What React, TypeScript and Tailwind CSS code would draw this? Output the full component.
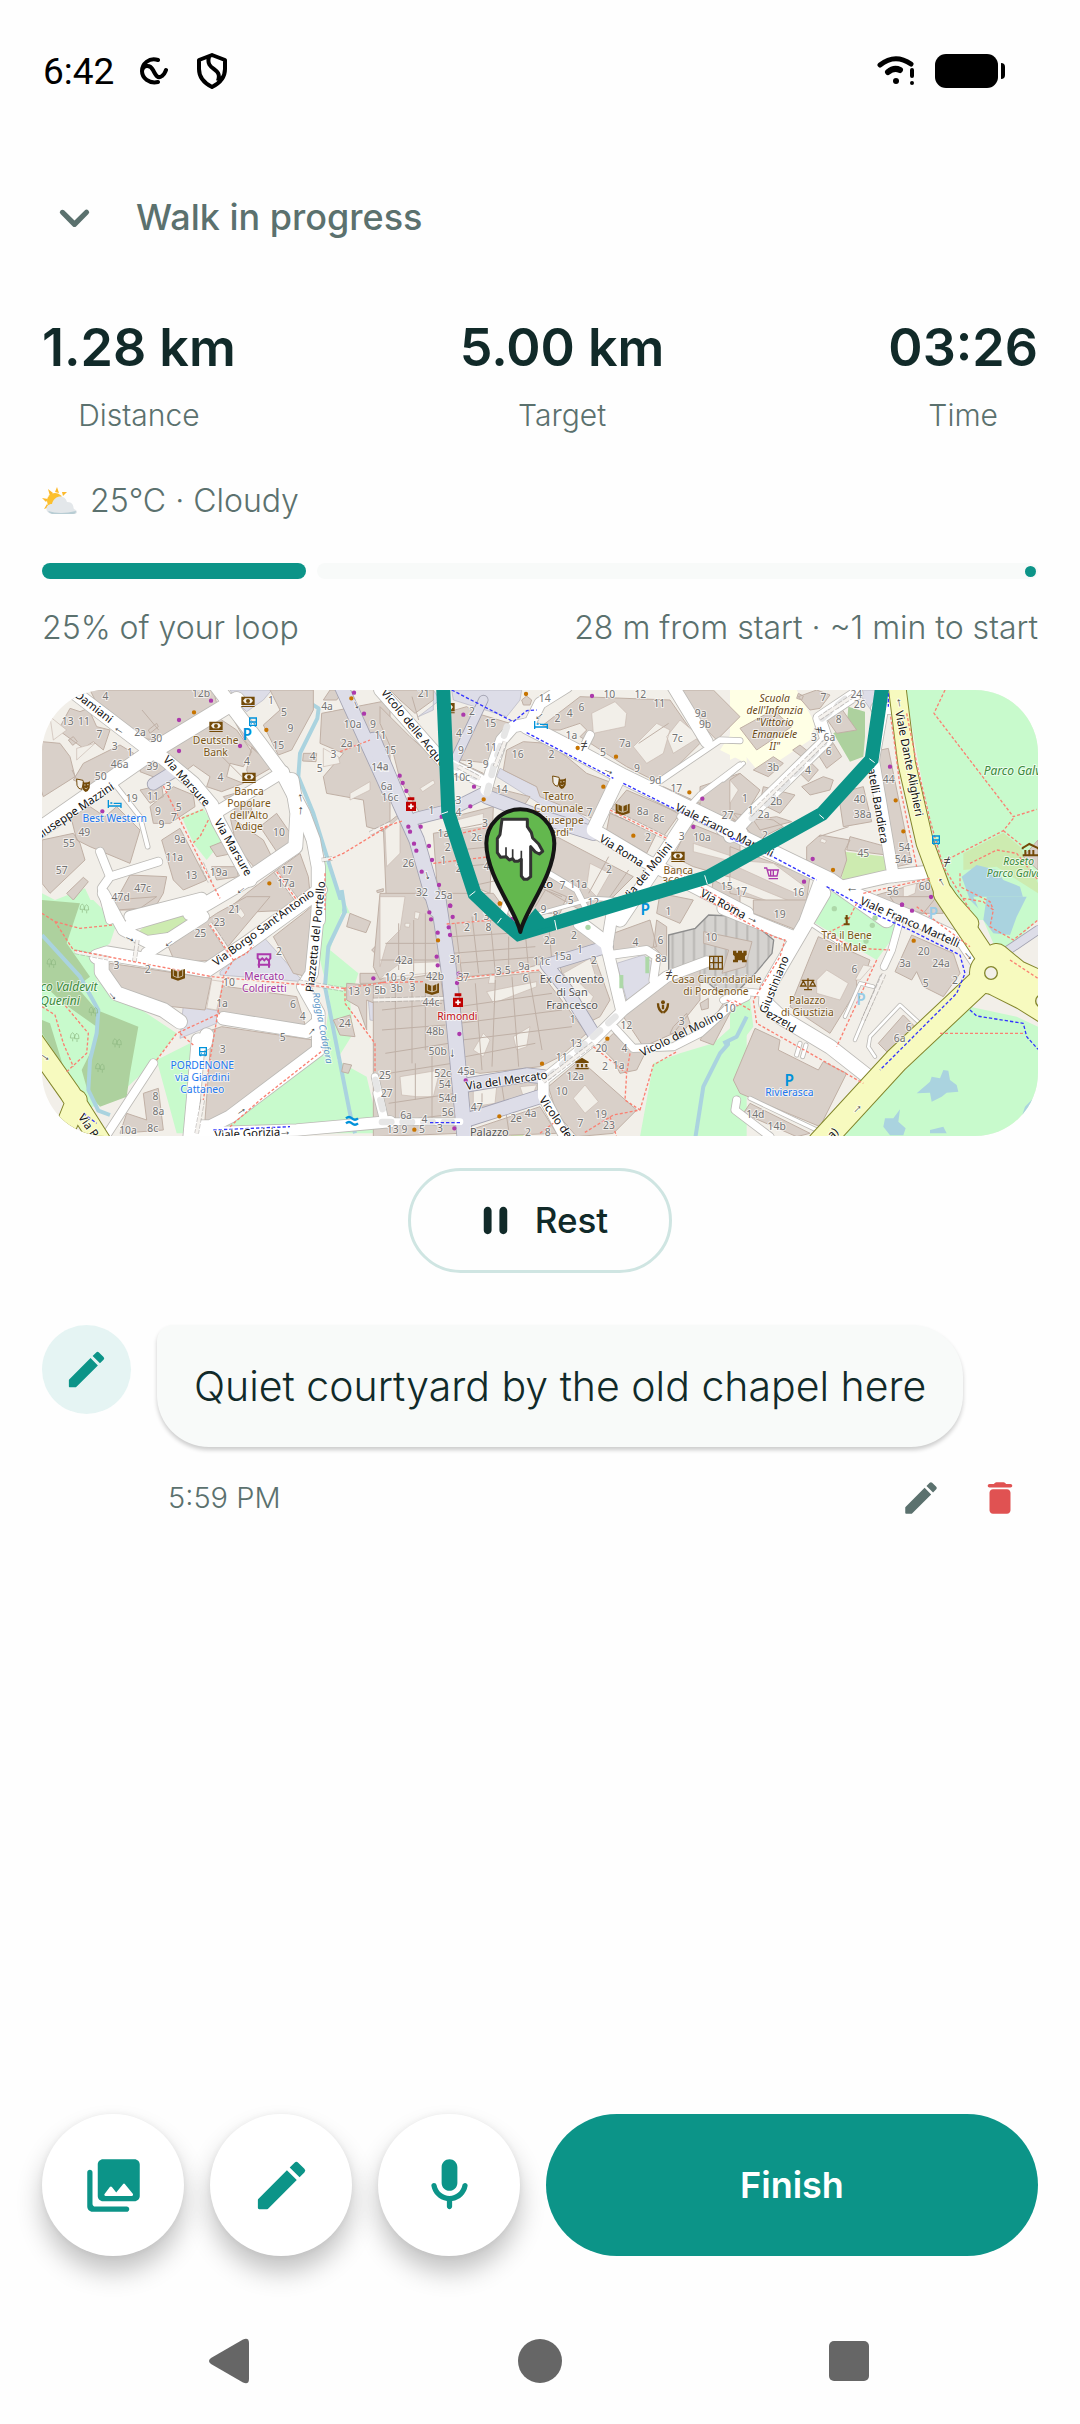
import type { ReactNode } from 'react';

type Label = [x: number, y: number, text: string, angle?: number];

interface Tile {
  x: number;
  y: number;
  park?: string;
  grass?: string;
  forest?: string;
  lake?: string;
  stream?: string;
  school?: string;
  buildings?: string;
  yards?: string;
  plazas?: string;
  alleys?: [number, string][];
  roads?: [number, string][];
  main?: [number, string][];
  lanes?: string;
  paths?: string;
  cycle?: string;
  shops?: string;
  food?: string;
  arrows?: Label[];
  numbers?: Label[];
  streets?: Label[];
  places?: Label[];
  water?: Label[];
  parks?: Label[];
  schools?: Label[];
  stops?: Label[];
  markets?: Label[];
  health?: Label[];
  areas?: Label[];
}

const TILES: Tile[] = [
  {
    x: -36,
    y: -30,
    park: 'M36 640L75 660L165 625L200 700L36 700ZM455 410L520 385L578 480L530 540L490 490ZM885 540L960 700L885 700Z',
    forest: 'M36 668L110 672L180 690L180 700L36 700Z',
    grass: 'M480 690L530 668L545 690Z',
    stream: 'M842 70L866 85L862 115L810 220L805 290L850 400L900 560L945 700',
    buildings:
      'M36 185L90 190L120 230L135 290L40 350L30 320ZM85 150L120 85L150 95L175 85L200 140L240 150L220 210L190 185L160 205ZM115 180L130 170L142 185L128 196ZM160 250L270 195L335 235L180 320L130 300ZM180 30L550 30L560 70L380 180L330 175L210 90ZM355 150L380 130L385 140L360 160ZM340 250L375 225L440 270L395 300L330 275ZM410 215L560 110L620 150L665 215L640 260L600 250L590 290L640 310L575 335L530 320L540 290L490 255L470 270ZM595 90L700 180L690 225L650 190ZM700 135L750 90L720 30L850 30L850 90L785 210L745 225ZM665 200L730 260L660 300L650 270ZM580 350L650 330L665 390L640 420ZM120 400L180 380L225 410L260 380L330 450L300 550L180 500L140 480ZM36 480L130 460L150 490L165 540L60 640L36 610ZM110 640L160 592L175 605L130 660ZM270 640L300 585L410 590L400 640L370 690L250 690ZM360 380L430 320L490 345L495 380L420 430L370 430ZM330 330L395 315L400 350L360 370ZM395 480L450 445L530 600L460 630L430 600ZM540 500L590 480L625 550L610 520L560 530ZM600 410L700 480L740 560L680 570L620 500ZM690 440L740 400L795 480L740 515ZM545 560L620 560L625 590L560 600ZM650 640L740 570L810 520L835 590L840 640L790 690L580 700ZM875 100L1080 60L1080 460L1010 440L1000 360L890 340L880 290L940 220L870 190ZM900 30L940 30L920 60L880 60ZM820 220L860 220L858 245L818 243ZM1040 632L1060 626L1060 634L1042 638Z',
    yards: 'M60 110L110 150L70 180ZM140 205L195 190L140 240ZM880 205L925 230L930 250L880 260ZM960 340L1020 305L1020 330L960 360Z',
    plazas: 'M600 30L725 30L700 60L650 95L625 70Z',
    alleys: [
      [34, 'M435 272L370 312'],
      [40, 'M925 0L1080 340'],
    ],
    roads: [
      [48, 'M0 470L365 215L620 60'],
      [40, 'M110 20L365 215L400 235L490 310L545 375L565 425L660 600'],
      [40, 'M560 20L690 190L760 285L820 400L850 480L865 560L865 720'],
      [34, 'M760 275L555 400'],
      [42, 'M785 300L802 400L796 500L650 600L480 700'],
      [24, 'M210 515L240 590L385 545M240 590L215 625L240 720'],
      [12, 'M260 320L330 410L353 500'],
      [34, 'M515 655L300 710'],
    ],
    paths: 'M400 318L455 430L520 560L570 655M455 415L520 388M535 420L510 470L490 488M740 575L800 660M885 580L885 690M895 540L940 520L1080 435M930 215L1020 180',
    lanes: 'M515 550L540 605M738 575L800 660M875 540L910 535M1020 460L1080 430',
    shops: 'M543 62h.1M447 120h.1M447 213h.1M630 198h.1M217 394h.1M972 38h.1M1002 101h.1',
    food: 'M492 97h.1M709 150h.1M718 610h.1M964 55h.1',
    arrows: [[270, 145, '←', 32], [804, 355, '→', -100], [804, 392, '→', -86], [628, 625, '←', -38], [985, 72, '→', 68]],
    numbers: [
      [226, 50, '4'], [513, 40, '12b'], [113, 123, '13'], [162, 125, '11'], [208, 162, '7'], [254, 198, '3'], [300, 216, '1'], [330, 158, '2a'],
      [379, 176, '30'], [269, 252, '46a'], [367, 259, '39'], [212, 290, '50'], [305, 355, '19'], [369, 350, '11'], [415, 319, '3'], [384, 395, '9'],
      [446, 383, '5'], [432, 412, '7'], [394, 433, '9'], [163, 458, '49'], [117, 491, '55'], [95, 570, '57'], [338, 625, '47c'], [272, 652, '47d'],
      [450, 478, '9a'], [433, 533, '11a'], [484, 586, '13'], [566, 577, '19a'], [571, 292, '4'], [651, 243, '4'], [723, 62, '1'], [762, 97, '5'],
      [781, 146, '9'], [745, 196, '15'], [747, 457, '10'], [771, 570, '17'], [768, 610, '17a'], [891, 79, '4a'], [848, 230, '4'],
      [869, 266, '5'], [910, 224, '3'], [950, 190, '2a'], [986, 206, '1'], [968, 133, '10a'], [1029, 134, '9'], [1051, 166, '11'], [1050, 261, '14a'],
    ],
    streets: [
      [192, 80, 'Damiani', 38], [132, 394, 'Giuseppe Mazzini', -34], [470, 303, 'Via Marsure', 48], [610, 502, 'Via Marsure', 60],
    ],
    places: [[557, 180, 'Deutsche'], [557, 216, 'Bank'], [657, 333, 'Banca'], [657, 369, 'Popolare'], [657, 405, "dell'Alto"], [657, 440, 'Adige']],
    stops: [[254, 415, 'Best Western']],
  },
  {
    x: 1014,
    y: -30,
    buildings:
      'M30 30L160 30L160 60L105 100L60 60ZM0 80L90 170L180 250L190 390L120 400L60 300L40 220L0 130ZM190 100L260 80L290 100L240 220L215 220ZM290 100L390 130L340 200L330 250L240 240ZM380 210L430 185L500 190L560 230L620 280L700 310L650 420L600 400L480 350L470 320L370 270ZM330 320L450 350L430 380L330 370ZM225 240L310 280L300 300L225 290ZM470 150L600 50L870 60L960 190L840 310L740 260L600 170L620 150L600 130L540 150ZM425 60L440 48L455 60L450 75L430 75ZM900 30L1000 30L1080 110L1010 180L950 120ZM740 330L900 400L850 470L690 390ZM690 400L830 460L800 520L680 450ZM850 320L960 370L930 420L800 350ZM960 320L1080 280L1080 430L960 380ZM930 430L1080 490L1080 600L940 560L880 530ZM530 470L760 590L700 650L600 690L480 620L510 560ZM220 410L340 380L330 640L280 620ZM10 440L60 400L120 470L140 690L20 690ZM160 460L220 450L280 640L370 690L200 690L170 600ZM1000 600L1080 640L1080 690L990 660ZM460 650L490 620L560 650L540 700L450 700Z',
    yards: 'M635 100L705 65L740 100L735 140L640 160ZM760 200L830 130L870 150L850 220L800 250ZM860 170L900 120L960 170L880 220ZM15 450L60 410L60 520L20 560ZM120 325L160 300L165 310L128 335ZM230 420L310 400L310 440L240 450ZM630 550L690 580L650 650L620 620ZM940 490L1060 530L1060 545L940 515Z',
    school: 'M1020 210L1100 90L1100 250Z',
    plazas: 'M215 30L425 30L420 60L380 110L220 60ZM360 265L490 330L640 430L620 460L350 290ZM160 30L180 60L115 110L160 90Z',
    alleys: [
      [34, 'M110 415L210 390L310 340'],
      [40, 'M320 350L450 400L640 460'],
      [26, 'M310 60L225 240'],
      [44, 'M-20 180L60 370L110 480L170 690'],
    ],
    roads: [
      [36, 'M0 30L190 245L300 300'],
      [34, 'M318 330L340 250L365 180L400 140L450 130L480 70L560 20'],
      [46, 'M440 138L600 220L730 290L1080 460'],
      [40, 'M712 300L640 450L800 545L1100 700'],
      [40, 'M925 410L820 570L720 720'],
      [36, 'M880 20L980 185'],
      [24, 'M630 165L610 205'],
      [16, 'M800 330L1020 180L1080 182M900 410L960 345L1080 255'],
      [16, 'M490 570L590 630L620 690'],
      [22, 'M390 640L370 700'],
    ],
    paths: 'M0 445L70 422M160 550L330 530M220 465L330 440M690 390L860 475M860 560L1080 690',
    lanes: 'M690 390L860 475M235 260L300 295M375 185L345 260',
    cycle: 'M215 30L400 125L440 92L470 90M440 158L700 295M730 310L1080 485',
    shops: 'M250 104h.1M636 48h.1M59 287h.1M68 309h.1M79 333h.1M185 410h.1M85 440h.1M90 455h.1M122 440h.1M102 491h.1M109 512h.1M147 498h.1M156 540h.1M125 575h.1M177 615h.1M211 677h.1M271 379h.1M282 320h.1M940 441h.1M967 356h.1',
    food: 'M438 42h.1M593 204h.1M708 230h.1M670 320h.1M311 358h.1M760 467h.1M928 337h.1M360 671h.1',
    arrows: [[473, 103, '←', -40], [688, 268, '→', 22], [149, 585, '→', 75], [612, 196, '≠', 0]],
    numbers: [
      [131, 40, '21'], [276, 94, '2'], [494, 54, '14'], [532, 114, '2'], [569, 99, '4'], [604, 83, '6'], [688, 44, '10'], [781, 42, '12'], [838, 70, '11'],
      [962, 100, '9a'], [975, 133, '9b'], [331, 130, '15'], [270, 152, '3'], [237, 160, '4'], [243, 212, '9'], [333, 202, '11'], [413, 223, '16'], [514, 223, '2'],
      [574, 165, '1a'], [735, 191, '7a'], [892, 175, '7c'], [669, 216, '5'], [771, 265, '9'], [826, 300, '9d'], [889, 326, '17'], [317, 253, '9'], [269, 253, '3'],
      [245, 291, '10c'], [365, 328, '14'], [235, 362, '3'], [235, 396, '4'], [315, 429, '3'], [154, 392, '1'], [10, 166, '1'], [31, 212, '15'], [8, 260, '4a'],
      [20, 319, '6a'], [30, 353, '16c'], [190, 461, '1a'], [203, 502, '2'], [289, 471, '2c'], [190, 541, '1'], [85, 550, '26'], [236, 565, '2'], [319, 559, '4'],
      [126, 636, '32'], [191, 645, '25a'], [628, 396, '7'], [788, 394, '8a'], [836, 416, '8c'], [804, 472, '2'], [905, 470, '3'], [966, 472, '10a'], [1042, 406, '27'],
      [687, 567, '2'], [547, 615, '7'], [595, 614, '11a'], [572, 662, '5'], [640, 668, '12'], [1040, 619, '15'],
    ],
    streets: [
      [102, 143, 'Vicolo delle Acque', 51], [1034, 450, 'Viale Franco Martelli', 26], [725, 512, 'Via Roma', 32], [802, 575, 'Via dei Molini', -51], [1030, 672, 'Via Roma', 28], [495, 612, 'sto', 0],
    ],
    places: [[536, 348, 'Teatro'], [536, 384, 'Comunale'], [536, 420, '"Giuseppe'], [536, 456, 'Verdi"'], [895, 570, 'Banca'], [873, 604, '360']],
  },
  {
    x: 2064,
    y: -30,
    park: 'M525 20L930 20L930 720L720 720L650 600L600 430L560 220ZM290 630L380 670L360 700L260 700Z',
    grass: 'M345 515L470 530L475 580L335 600ZM700 520L820 458L870 500L924 610L924 640L800 560L700 570Z',
    lake: 'M695 590L740 555L800 570L820 600L870 620L890 690L850 720L760 700L720 660Z',
    school: 'M0 30L200 30L255 130L240 180L90 280L40 220L0 240Z',
    buildings:
      'M30 145L130 90L185 140L80 210ZM205 50L260 30L300 45L270 85L240 90ZM205 40L220 48L215 60L200 55ZM285 110L330 80L380 150L320 160ZM188 210L210 195L235 215L215 230ZM70 270L130 230L160 250L115 290ZM210 280L240 245L265 270L235 305ZM265 225L310 190L335 230L290 265ZM215 320L280 290L310 300L300 330L240 345ZM100 320L195 345L150 400L90 370ZM30 280L90 330L30 430L0 410L0 300ZM10 400L130 420L160 440L80 480ZM325 340L400 320L425 425L340 440ZM430 215L475 205L545 550L500 560ZM230 500L270 465L360 480L345 510L350 540L330 600L230 540ZM360 470L470 500L470 525L350 510ZM0 500L240 590L225 690L0 640ZM70 420L140 410L185 425L90 450ZM440 645L600 600L620 640L640 700L420 700ZM880 530L924 480L924 570Z',
    forest: 'M310 160L350 140L355 80L405 95L405 170L400 230L360 245Z',
    yards: 'M10 540L130 550L225 620L220 650L130 610L20 560ZM0 590L220 680L210 700L0 620ZM520 620L560 610L555 640L520 655ZM0 300L25 330L0 370ZM275 475L290 482L285 490L270 485Z',
    plazas: 'M380 30L435 30L430 100Z',
    roads: [
      [36, 'M0 470L60 405L290 180L268 115L380 40'],
      [44, 'M-20 445L300 600L470 720'],
      [38, 'M330 622L470 590L600 575'],
      [34, 'M455 100L430 240L490 590'],
      [40, 'M270 610L230 720'],
      [10, 'M40 250L-20 300'],
      [34, 'M440 85L480 85'],
    ],
    main: [[50, 'M500 10L530 250L585 490L640 640L720 730']],
    paths: 'M645 30L612 100L850 410L920 388M850 415L820 452L640 545M820 452L880 500M482 110L495 200L510 320L560 560M530 100L560 250L600 420L640 560L720 690M400 640L600 595M720 550L800 510L860 520L924 600M690 580L690 620L780 665L790 690',
    lanes: 'M60 405L290 180M268 115L380 40',
    cycle: 'M0 475L100 515L260 600M290 620L400 680M475 40L475 80',
    shops: 'M480 260h.1M222 605h.1M248 537h.1M516 674h.1M603 651h.1',
    food: 'M497 361h.1M520 454h.1M309 570h.1',
    arrows: [[500, 70, '→', -100], [366, 623, '←', 0], [628, 610, '→', -120], [651, 544, '≠', 0], [270, 150, '≠', 80]],
    numbers: [
      [280, 51, '7'], [379, 44, '24'], [389, 74, '26'], [326, 117, '8'], [252, 173, '3'], [298, 171, '6a'], [296, 215, '6'], [234, 270, '4'], [129, 263, '3b'],
      [139, 363, '2b'], [101, 402, '2a'], [45, 356, '1'], [62, 391, '1'], [2, 405, '7'], [105, 466, '2'], [476, 298, '44'], [389, 358, '40'], [398, 403, '38a'],
      [400, 520, '45'], [523, 503, '54'], [521, 539, '54a'], [488, 635, '56'], [584, 618, '60'], [34, 635, '17'], [205, 638, '16'],
    ],
    streets: [[442, 362, 'Fratelli Bandiera', 80], [538, 250, 'Viale Dante Alighieri', 79]],
    schools: [[134, 56, 'Scuola'], [134, 92, "dell'Infanzia"], [134, 128, '"Vittorio'], [134, 164, 'Emanuele'], [134, 199, 'II"']],
    parks: [[872, 272, 'Parco Galvani', 0]],
  },
  {
    x: -36,
    y: 630,
    park: 'M36 0L190 0L260 70L240 130L200 160L200 240L440 400L380 480L250 600L130 640L36 420ZM380 480L480 430L490 700L440 700ZM870 0L945 0L900 150L985 220L960 300L970 400L920 480L1010 530L1050 700L500 700L620 650L880 440L900 300L870 180Z',
    forest: 'M36 0L150 10L110 130L180 230L140 260L200 330L325 380L300 520L290 590L210 620L175 580L155 510L195 430L200 380L100 310L36 250ZM36 360L60 370L100 500L36 400Z',
    grass: 'M310 105L400 40L540 10L410 108Z',
    stream: 'M36 105L150 230L205 330L200 400L180 480L175 570L205 632L240 645M935 -30L945 35L895 140L885 260L960 640L975 700',
    buildings:
      'M230 205L240 190L545 235L525 330L330 310L235 260ZM560 255L800 290L830 390L565 340ZM545 390L575 380L850 420L850 450L570 665L525 660ZM415 140L560 40L650 -10L720 -10L560 180L480 185L430 175ZM730 110L820 40L855 10L830 230L790 220ZM340 580L385 565L400 690L270 700L290 640L350 660ZM250 0L380 -10L330 25L260 30ZM960 40L1022 65L1008 98L950 80ZM1025 150L1040 135L1052 150L1040 165ZM1060 130L1080 125L1080 200L1045 195ZM990 220L1080 220L1080 250L990 250ZM950 250L1080 260L1080 330L1010 300L1010 390L985 320L950 300ZM910 360L960 345L975 410L930 405ZM940 490L965 495L955 520L935 515ZM1030 430L1080 400L1080 520L1040 520Z',
    yards: 'M620 40L632 25L645 45L635 55ZM545 240L580 245L560 330L530 325Z',
    plazas: 'M570 215L700 110L820 245L570 225ZM460 315L580 335L560 370L450 415ZM1015 300L1080 310L1080 370L1020 360Z',
    roads: [
      [42, 'M200 170L230 160L530 210L650 130L870 -30'],
      [42, 'M215 170L215 215L260 280L400 330L450 365'],
      [34, 'M350 160L420 115L520 50'],
      [34, 'M220 -20L280 90L350 125L420 115M300 75L540 5'],
      [38, 'M868 -10L845 220L820 260L865 340L865 450L600 650L540 680L490 680'],
      [38, 'M580 355L830 395L860 370'],
      [40, 'M505 420L490 600L480 710M530 405L525 430'],
      [24, 'M370 490L220 720'],
      [34, 'M480 700L800 690L1080 665'],
      [20, 'M1035 530L1065 660'],
    ],
    main: [[60, 'M0 410L120 580L215 730M140 600L100 700']],
    paths: 'M36 40L75 65L130 150L545 230L940 265M75 65L150 85L250 75M36 320L75 345L100 430L130 500M110 515L170 460L175 400L100 310M380 480L440 400L570 340M450 400L490 435M540 75L610 180L580 230M610 180L650 160L670 135M580 240L520 600M945 265L945 310L1035 430L1035 520M600 680L690 600L880 450M940 265L1080 245',
    lanes: 'M135 155L235 175M322 120L313 185M540 70L600 160M805 245L940 268M518 600L500 700',
    cycle: 'M160 640L200 670M550 690L780 680',
    shops: 'M1030 235h.1',
    arrows: [[302, 110, '→', 25], [412, 124, '←', -38], [253, 284, '→', 50], [839, 390, '→', -50], [630, 628, '→', -35], [765, 692, '→', -5], [50, 466, '→', 35]],
    numbers: [
      [613, 29, '21'], [568, 68, '23'], [511, 100, '25'], [259, 195, '3'], [353, 208, '2'], [747, 154, '2'], [597, 247, '10'], [576, 309, '1a'], [789, 314, '6'],
      [818, 349, '4'], [758, 413, '5'], [578, 448, '3'], [972, 273, '13'], [1012, 273, '9'], [1051, 271, '5b'], [944, 369, '24'], [1064, 526, '25'], [1070, 580, '27'],
      [376, 588, '8'], [385, 634, '8a'], [368, 685, '8c'], [294, 692, '10a'], [1072, 234, '1'],
    ],
    streets: [[700, 82, "Via Borgo Sant'Antonio", -36], [856, 110, 'Piazzetta del Portello', -84], [196, 706, 'Via Roma', 55], [652, 700, 'Viale Gorizia', -3]],
    water: [[878, 384, 'Roggia Codafora', 79]],
    parks: [[90, 259, 'Parco Valdevit', 0], [90, 301, 'Querini', 0]],
    stops: [[517, 496, 'PORDENONE'], [517, 532, 'via Giardini'], [517, 568, 'Cattaneo']],
    markets: [[703, 230, 'Mercato'], [703, 266, 'Coldiretti']],
  },
  {
    x: 1014,
    y: 630,
    park: 'M820 490L900 460L1000 430L1100 340L1100 710L780 710L800 600Z',
    grass: 'M20 405L48 395L58 460L25 460ZM460 360L540 335L550 365L530 400L500 375L470 385ZM390 710L400 695L430 700L430 710Z',
    stream: 'M1090 380L1020 460L970 560L945 720',
    buildings:
      'M0 -20L160 -20L190 200L60 205L0 240L-20 200ZM195 -20L340 -20L420 90L560 60L660 120L670 150L490 190L400 215L215 235ZM215 245L480 215L620 400L540 470L480 500L300 520L250 510ZM-20 250L180 220L210 440L240 700L-20 710ZM540 200L640 160L690 300L660 350L620 370L560 270ZM700 100L810 60L830 140L700 160ZM830 60L860 80L860 180L820 140ZM730 350L860 240L960 200L960 300L880 400L790 440ZM880 380L920 340L930 370L900 405L870 400ZM960 310L985 295L985 325L965 330ZM700 400L755 450L800 450L770 510L720 520L700 480L660 440ZM505 560L600 480L770 630L700 700L590 710L530 640ZM260 570L470 530L480 580L270 650ZM270 690L480 620L530 700L270 710ZM840 -20L940 0L900 70L830 40ZM960 420L1030 310L1060 320L1000 435Z',
    yards: 'M0 -10L75 -10L60 90L20 130L0 200ZM60 190L180 185L185 215L0 235ZM550 220L630 175L650 240L600 250L640 290L620 330ZM280 570L350 560L345 610L280 620ZM580 595L615 555L655 605L615 640ZM60 530L180 510L160 590L110 590L65 585ZM75 70L90 70L88 82L75 80ZM310 400L330 420L310 470L280 450ZM400 410L450 380L440 440L410 450ZM330 225L345 225L345 250L325 250ZM320 275L470 245L470 260L340 310ZM105 35L120 38L115 58L103 55ZM420 560L470 555L460 580L430 590Z',
    plazas: 'M710 190L790 165L820 190L820 250L740 300ZM-20 290L45 300L40 350L-20 360ZM90 290L115 295L110 325L90 325ZM380 295L460 275L460 290L385 310Z',
    alleys: [
      [44, 'M150 -20L175 0L205 200L225 400L255 720'],
      [40, 'M260 555L440 525L490 530M260 660L480 590'],
      [36, 'M680 140L500 195L560 270L640 400'],
    ],
    roads: [
      [32, 'M980 185L860 230L730 330L640 420L490 540L490 590L560 720'],
      [34, 'M700 20L680 140L725 330'],
      [24, 'M690 165L800 150L830 170L820 240'],
      [22, 'M705 385L760 445L880 440L960 400L1060 310L1100 290'],
      [20, 'M-20 665L240 665M-10 580L10 660'],
      [10, 'M480 40L640 -5L720 0'],
      [40, 'M600 70L680 130'],
    ],
    paths: 'M200 72L400 55M0 248L130 245M230 235L480 210M640 440L740 520L735 600L780 630L700 645L610 700M750 460L740 520M780 630L820 495L890 455M480 700L520 670M960 -10L1080 50M690 650L710 710M1040 300L1080 320',
    lanes: 'M640 430L490 545M-20 300L190 295',
    cycle: 'M150 668L240 668',
    shops: 'M148 37h.1M153 58h.1M210 17h.1M218 51h.1M206 82h.1M173 98h.1M210 105h.1M170 170h.1M173 196h.1M236 221h.1M231 249h.1M238 402h.1M257 541h.1M223 685h.1M397 57h.1',
    food: 'M174 121h.1M359 10h.1M486 491h.1M682 416h.1M358 649h.1M103 689h.1',
    arrows: [[224, 460, '→', 90], [867, 223, '≠', 0]],
    numbers: [
      [287, 52, '1'], [319, 50, '3'], [261, 83, '2'], [325, 82, '8'], [490, 27, '9'], [526, 47, '8'], [509, 122, '2a'], [582, 107, '2'], [600, 149, '1'],
      [641, 182, '2'], [548, 170, '15a'], [485, 184, '11c'], [766, 127, '4'], [841, 121, '6'], [843, 176, '8a'], [865, 33, '1'], [994, 112, '10'], [72, 181, '42a'],
      [226, 179, '31'], [32, 233, '10'], [69, 231, '6'], [95, 229, '2'], [165, 229, '42b'], [8, 270, 'b'], [50, 266, '3b'], [97, 263, '3'], [153, 308, '44c'],
      [250, 233, '37'], [356, 215, '3'], [383, 212, '5'], [432, 199, '9a'], [436, 235, '6'], [166, 395, '48b'], [173, 455, '50b'], [188, 519, '52c'], [194, 553, '54'],
      [203, 595, '54d'], [259, 514, '45a'], [290, 622, '47'], [203, 638, '56'], [15, 526, '25'], [78, 645, '6a'], [133, 657, '4'], [38, 689, '13'],
      [73, 689, '9'], [126, 689, '5'], [180, 686, '3'], [408, 654, '2e'], [452, 641, '4a'], [545, 573, '10'], [586, 530, '12a'], [545, 472, '11'], [588, 429, '13'],
      [578, 358, '1'], [664, 446, '20'], [733, 445, '4'], [739, 377, '12'], [905, 363, '3'], [1049, 326, '10'], [675, 499, '2'], [716, 496, '1a'], [663, 643, '19'],
      [687, 677, '23'], [601, 671, '7'], [503, 698, '8'], [444, 698, '2'],
    ],
    streets: [[380, 541, 'Via del Mercato', -8], [530, 655, 'Vicolo del', 55], [905, 400, 'Vicolo del Molino', -26]],
    areas: [[576, 237, 'Ex Convento'], [576, 276, 'di San'], [576, 316, 'Francesco'], [328, 696, 'Palazzo']],
    places: [[1010, 238, 'Casa Circondariale'], [1008, 273, 'di Pordenone']],
    health: [[232, 350, 'Rimondi']],
  },
  {
    x: 2064,
    y: 630,
    park: 'M300 -10L520 70L440 180L240 60ZM720 320L860 350L924 380L924 710L320 710ZM730 -10L924 -10L924 60L830 150L790 130ZM0 290L60 300L70 380L0 470ZM0 650L20 710L0 710Z',
    stream: 'M50 350L20 410L-20 430',
    lake: 'M560 580L600 545L605 530L630 535L640 510L655 512L660 540L680 555L685 575L650 578L635 590L605 605L600 578ZM465 655L490 655L510 628L505 665L527 685L520 706L480 706L460 680ZM870 665L885 620L924 580L924 650ZM770 -10L890 -10L860 50L840 105L790 100L760 60ZM600 690L640 680L650 700L600 700Z',
    buildings:
      'M70 0L240 0L200 90L70 40ZM265 110L420 180L410 210L380 230L380 270L300 400L180 320L240 170ZM545 105L670 160L690 220L640 290L580 260L560 215L545 240L495 215ZM445 430L520 345L560 385L480 465ZM75 385L150 420L145 450L265 510L280 485L350 520L270 680L30 580L10 540ZM60 610L240 700L200 710L40 640ZM480 -10L620 -10L580 40L500 20Z',
    yards: 'M260 240L290 210L355 250L330 300L260 280ZM375 240L400 195L425 200L390 240Z',
    alleys: [[24, 'M820 160L924 90']],
    roads: [
      [42, 'M280 -20L110 270L108 310L150 350L300 440L440 550'],
      [36, 'M-20 25L200 115'],
      [40, 'M370 -20L540 50L700 125L740 185'],
      [20, 'M510 60L485 150L462 200'],
      [22, 'M20 600L15 630L120 710'],
      [10, 'M60 595L260 690M210 430L200 465M228 435L218 470M240 70L330 130'],
      [8, 'M455 230L375 420M345 350L390 250L430 260M435 470L415 440L420 410L510 315L575 375'],
      [20, 'M-20 300L40 275L100 280'],
    ],
    main: [
      [58, 'M640 -20L760 160'],
      [72, 'M745 250L500 480L270 730'],
      [76, 'M800 250L880 290L960 340M800 170L860 220L960 265'],
      [126, 'M783 218h1'],
    ],
    paths: 'M0 40L130 110L165 120L150 170L70 300L80 370L400 550M380 10L350 70L300 95L320 120L390 145L480 150M440 180L320 440M630 400L880 400M560 20L720 140M840 180L924 235M700 -5L760 5L790 30L780 80L850 120L924 60M60 330L10 300',
    lanes: 'M462 222L400 360',
    cycle: 'M385 20L540 90L690 165L705 220L680 280L450 510M720 330L740 348L880 370L890 410L924 448',
    shops: 'M516 14h.1M546 32h.1',
    food: 'M551 122h.1',
    arrows: [[70, 52, '→', 25], [720, 163, '→', 48], [377, 622, '→', -45]],
    numbers: [
      [149, 43, '19'], [373, 207, '6'], [581, 154, '20'], [525, 190, '3a'], [633, 190, '24a'], [587, 250, '5'], [675, 240, '2'], [536, 381, '6'], [509, 414, '6a'],
      [76, 642, '14d'], [140, 678, '14b'],
    ],
    streets: [[540, 66, 'Viale Franco Martelli', 24], [132, 254, 'Giustiniano', -68], [152, 366, 'Piazza', 207], [308, 700, 'a)', -45]],
    places: [[350, 107, 'Tra il Bene'], [350, 143, 'e il Male'], [232, 301, 'Palazzo'], [232, 337, 'di Giustizia']],
    stops: [[178, 578, 'Rivierasca']],
  },
];

function Layer({ children }: { children: (tile: Tile) => ReactNode }) {
  return (
    <>
      {TILES.map((tile) => (
        <g key={`${tile.x}:${tile.y}`} transform={`translate(${tile.x} ${tile.y})`}>
          {children(tile)}
        </g>
      ))}
    </>
  );
}

function Lines({ items, stroke, extra = 0 }: { items?: [number, string][]; stroke: string; extra?: number }) {
  return (
    <g fill="none" stroke={stroke} strokeLinecap="round" strokeLinejoin="round">
      {items?.map(([width, d]) => <path key={d} d={d} strokeWidth={width + extra} />)}
    </g>
  );
}

function Labels({ items, fill, size, italic }: { items?: Label[]; fill: string; size: number; italic?: boolean }) {
  return (
    <g
      fill={fill}
      fontSize={size}
      fontStyle={italic ? 'italic' : undefined}
      textAnchor="middle"
      stroke="#ffffff"
      strokeOpacity={0.65}
      strokeWidth={6}
      strokeLinejoin="round"
      paintOrder="stroke"
    >
      {items?.map(([x, y, text, angle = 0]) => (
        <text key={`${x},${y}`} transform={`translate(${x} ${y}) rotate(${angle})`} y={Math.round(size * 0.36)}>
          {text}
        </text>
      ))}
    </g>
  );
}

function Bank({ x, y }: { x: number; y: number }) {
  return (
    <g transform={`translate(${x} ${y})`}>
      <path d="M-20 -15H20V10H-20ZM-20 13H20V16H-20Z" fill="#734a08" />
      <path d="M-15 -3L-9 -10H9L15 -3L9 5H-9Z" fill="#f2efe9" />
      <circle cy={-2} r={6} fill="#734a08" />
    </g>
  );
}

function Bus({ x, y }: { x: number; y: number }) {
  return (
    <g transform={`translate(${x} ${y})`} fill="none" stroke="#0092da" strokeWidth={4}>
      <path d="M-10 -12H10V10H-10ZM-10 0H10M-7 10V14M7 10V14M-4 5H-6M4 5H6" />
    </g>
  );
}

function Book({ x, y }: { x: number; y: number }) {
  return (
    <g transform={`translate(${x} ${y})`}>
      <path d="M-21 -15L0 -8L21 -15V13L0 20L-21 13Z" fill="#734a08" />
      <path d="M-14 -14L-1 -8V11L-14 6ZM14 -14L1 -8V11L14 6Z" fill="#734a08" stroke="#f2efe9" strokeWidth={2} />
    </g>
  );
}

function Masks({ x, y }: { x: number; y: number }) {
  return (
    <g transform={`translate(${x} ${y})`}>
      <path d="M-19 -19L0 -15L2 -6L-4 12Q-14 12 -18 0Z" fill="#f2efe9" stroke="#734a08" strokeWidth={3} />
      <path d="M-1 -10Q10 -6 21 -12L20 8Q16 18 8 20Q-2 14 -2 4Z" fill="#734a08" />
      <path d="M3 -1h5M12 -2h5M5 8q5 5 9 -1M-14 -8h4M-7 -7h4" stroke="#f2efe9" strokeWidth={2} fill="none" />
    </g>
  );
}

function Pharmacy({ x, y }: { x: number; y: number }) {
  return (
    <g transform={`translate(${x} ${y})`}>
      <path d="M-10 -21H10V-12H-10ZM-15 -8H15V20H-15Z" fill="#bf0000" />
      <path d="M0 -2V14M-8 6H8" stroke="#ffffff" strokeWidth={5} />
    </g>
  );
}

function Parking({ x, y, pale }: { x: number; y: number; pale?: boolean }) {
  return (
    <text x={x} y={y} fontSize={46} fontWeight={600} textAnchor="middle" fill={pale ? '#99cbe6' : '#0092da'}>
      P
    </text>
  );
}

function Bed({ x, y }: { x: number; y: number }) {
  return <path d={`M${x - 19} ${y - 12}v24M${x - 19} ${y + 6}h38v-8h-22M${x + 19} ${y}v12M${x - 13} ${y - 3}h6`} fill="none" stroke="#0092da" strokeWidth={4} />;
}

function Tree({ x, y }: { x: number; y: number }) {
  return <path d={`M${x - 6} ${y + 12}v-8M${x - 13} ${y + 2}q0-14 7-16q6 2 6 16zM${x + 7} ${y + 14}v-8M${x} ${y + 4}q0-14 7-16q6 2 6 16z`} fill="none" stroke="#8cb680" strokeWidth={2} />;
}

function WalkMap() {
  return (
    <svg
      viewBox="0 0 2988 1338"
      preserveAspectRatio="xMidYMid slice"
      className="block h-[446px] w-full rounded-[63px] bg-[#f2efe9] font-['Noto_Sans',sans-serif]"
      role="img"
      aria-label="Walk map"
    >
      <defs>
        <pattern id="hatch" width={32} height={32} patternUnits="userSpaceOnUse">
          <rect width={32} height={32} fill="#d5d3d0" />
          <path d="M4 0V32" stroke="#b9b7b4" strokeWidth={6} />
        </pattern>
      </defs>

      {/* Ground cover */}
      <Layer>
        {(t) => (
          <>
            <path d={t.park} fill="#c8facc" />
            <path d={t.forest} fill="#add19e" />
            <path d={t.grass} fill="#cdebb0" />
            <path d={t.school} fill="#ffffe5" />
            <path d={t.lake} fill="#aad3df" />
            <path d={t.stream} fill="none" stroke="#aad3df" strokeWidth={12} strokeLinejoin="round" />
          </>
        )}
      </Layer>
      <path d="M1880 735L1960 715L2000 675L2110 680L2195 750L2190 790L2140 850L2060 930L2000 880L1880 840Z" fill="url(#hatch)" stroke="#8d8d8d" strokeWidth={4} />
      <path d="M1985 725L2130 755L2110 830L2040 850L2060 780L1985 760Z" fill="#d9d0c9" stroke="#c0b0a5" strokeWidth={3} />

      {/* Buildings */}
      <Layer>
        {(t) => (
          <>
            <path d={t.plazas} fill="#dddde8" stroke="#b4b4c0" strokeWidth={2} />
            <path d={t.buildings} fill="#d9d0c9" stroke="#c0b0a5" strokeWidth={3} />
            <path d={t.yards} fill="#f2efe9" stroke="#c8bab0" strokeWidth={2} />
          </>
        )}
      </Layer>
      <g fill="none" stroke="#bfb0a6" strokeWidth={3}>
        <path d="M1070 700V840M1115 690V850M1150 670V860M1030 760H1180M1015 810H1190M1060 900V1310M1110 880V1120M1150 890V1080M1020 960L1200 940M1020 1020L1210 1005M1030 1090L1220 1060M1040 1150L1230 1120M1120 1120V1230M1170 1090V1300M1040 1240L1240 1210M1090 1290L1250 1270" />
        <path d="M1240 700L1260 860M1290 680L1310 850M1345 690L1360 850M1400 740V850M1450 730L1460 840M1520 700L1530 820M1230 740L1400 730M1230 790L1480 770M1240 820L1500 800M1250 890L1270 1150M1300 880L1320 1140M1360 870L1350 1130M1410 860L1430 1130M1250 950L1530 910M1250 1000L1560 960M1260 1050L1590 1010M1270 1100L1480 1060M1460 850L1500 1080M1380 1190L1400 1320M1320 1210V1290" />
        <path d="M1110 20L1130 90M1230 420L1330 400M1250 480L1350 470M1260 530L1360 520M1280 590L1370 570M1480 650L1510 600L1560 620M1700 500L1640 610M1760 540L1690 640M1880 100L1790 160M2330 440L2420 410M90 240L130 320M300 60L350 120M520 180L600 260" />
      </g>

      {/* Streets */}
      <Layer>{(t) => <Lines items={t.alleys} stroke="#a3a3b2" extra={5} />}</Layer>
      <Layer>{(t) => <Lines items={t.roads} stroke="#bcbab6" extra={5} />}</Layer>
      <Layer>{(t) => <Lines items={t.alleys} stroke="#dddde8" />}</Layer>
      <Layer>{(t) => <Lines items={t.roads} stroke="#ffffff" />}</Layer>
      <Layer>{(t) => <Lines items={t.main} stroke="#83862c" extra={6} />}</Layer>
      <Layer>{(t) => <Lines items={t.main} stroke="#f7fabf" />}</Layer>
      <circle cx={2847} cy={849} r={19} fill="#f2efe9" stroke="#83862c" strokeWidth={4} />
      <circle cx={3000} cy={933} r={19} fill="#f2efe9" stroke="#83862c" strokeWidth={4} />
      <g fill="none" stroke="#e6e6e6" strokeWidth={20} strokeLinecap="round" strokeDasharray="28 34">
        <path d="M1395 110L1355 230L1335 310M1220 220L1320 270M2130 385L2345 160M2340 85L2430 10M1720 980L1520 1160M1020 1296H1230M1000 1170L1030 1290" />
      </g>
      <Layer>
        {(t) => (
          <g fill="none">
            <path d={t.lanes} stroke="#8b8580" strokeOpacity={0.45} strokeWidth={14} strokeDasharray="14 4" />
            <path d={t.lanes} stroke="#f5f2ee" strokeWidth={9} />
            <path d={t.paths} stroke="#fa8072" strokeWidth={4} strokeDasharray="9 6" strokeLinejoin="round" />
            <path d={t.cycle} stroke="#3333ff" strokeWidth={4} strokeDasharray="10 6" strokeLinejoin="round" />
            <path d={t.shops} stroke="#ac39ac" strokeWidth={13} strokeLinecap="round" />
            <path d={t.food} stroke="#c77400" strokeWidth={13} strokeLinecap="round" />
          </g>
        )}
      </Layer>
      <g fill="#add8a8">
        <circle cx={2377} cy={656} r={8} />
        <circle cx={2499} cy={684} r={8} />
        <circle cx={2491} cy={706} r={8} />
        <circle cx={2472} cy={753} r={8} />
        <circle cx={1638} cy={712} r={8} />
        <path d="M1810 800h12v50h-12zM1732 855h12v40h-12z" />
      </g>

      {/* Labels */}
      <Layer>
        {(t) => (
          <>
            <Labels items={t.numbers} fill="#737373" size={31} />
            <Labels items={t.arrows} fill="#444444" size={38} />
            <Labels items={t.streets} fill="#111111" size={34} />
            <Labels items={t.places} fill="#7a5618" size={31} />
            <Labels items={t.areas} fill="#555555" size={33} />
            <Labels items={t.stops} fill="#2277ee" size={31} />
            <Labels items={t.markets} fill="#a033a0" size={31} />
            <Labels items={t.health} fill="#c40d15" size={31} />
            <Labels items={t.water} fill="#5b96c8" size={29} italic />
            <Labels items={t.parks} fill="#3b8a3b" size={36} italic />
            <Labels items={t.schools} fill="#6a4a16" size={31} italic />
          </>
        )}
      </Layer>
      <Labels items={[[2930, 515, 'Roseto'], [2930, 551, 'Parco Galvani']]} fill="#3b8a3b" size={31} italic />

      {/* Points of interest */}
      <Bank x={618} y={35} />
      <Bank x={522} y={110} />
      <Bank x={621} y={263} />
      <Bank x={1908} y={500} />
      <Bank x={1218} y={54} />
      <Bus x={633} y={96} />
      <Bus x={2682} y={450} />
      <Bus x={483} y={1085} />
      <Parking x={616} y={151} />
      <Parking x={1810} y={674} />
      <Parking x={2242} y={1187} />
      <Parking x={2457} y={946} pale />
      <Parking x={2674} y={686} pale />
      <Book x={408} y={852} />
      <Book x={1742} y={356} />
      <Book x={1170} y={895} />
      <Masks x={123} y={286} />
      <Masks x={1551} y={277} />
      <Pharmacy x={1107} y={343} />
      <Pharmacy x={1248} y={931} />
      <Bed x={218} y={342} />
      <Bed x={1497} y={105} />
      <Tree x={28} y={820} />
      <Tree x={98} y={1042} />
      <Tree x={225} y={1060} />
      <Tree x={174} y={1134} />
      <Tree x={154} y={965} />
      <Tree x={127} y={656} />
      <path d="M647 793h38v12l-6 6-6-6-6 6-6-6-7 6-7-6zM651 811v22M681 811v22M647 824h38" fill="none" stroke="#ac39ac" strokeWidth={6} />
      <path d="M2166 534h8l7 24h24l4-18h-32M2180 566h28M2186 541v15M2194 541v15" fill="none" stroke="#ac39ac" strokeWidth={4} />
      <path d="M1600 1115L1620 1103L1640 1115V1119H1600ZM1604 1122h6v10h-6zM1617 1122h6v10h-6zM1630 1122h6v10h-6zM1600 1134h40v4h-40z" fill="#734a08" />
      <path d="M2942 548v-4l20-12l26 12v4M2950 550v14M2962 550v14M2974 550v14M2942 566h46" transform="translate(0 -70)" fill="none" stroke="#734a08" strokeWidth={6} />
      <path d="M2003 799h38v38h-38zM2015 799v38M2029 799v38M2003 818h38" fill="none" stroke="#734a08" strokeWidth={4} />
      <path d="M2073 782h10v6h5v-6h12v6h4v-6h10v12l-5 5v10h5v8h-14v-6h-12v6h-15v-8h5v-10l-5-5z" fill="#734a08" />
      <path d="M2279 871h38M2298 865v34M2286 899h24M2284 873l-8 15h16zM2312 873l-8 15h16z" fill="none" stroke="#734a08" strokeWidth={4} />
      <path d="M1848 940q0 20 14 28M1878 940q0 20 -14 28M1863 944v14" fill="none" stroke="#734a08" strokeWidth={7} />
      <circle cx={1863} cy={937} r={6} fill="#734a08" />
      <path d="M2405 703h18M2414 675v26M2408 685h12" stroke="#734a08" strokeWidth={6} />
      <path d="M912 1285q9-8 18 0t18 0M912 1300q9-8 18 0t18 0" fill="none" stroke="#0092da" strokeWidth={7} />

      {/* Walked route */}
      <path d="M1203 -20L1219 370L1298 612L1380 690L1430 732L2000 560L2340 372L2489 208L2522 -20" fill="none" stroke="#0c9488" strokeWidth={42} />
      <path d="M1408 740L1480 655L1510 690L1550 685L1545 705Z" fill="#0c9488" />
      <path d="M1198 372L1218 365M1282 618L1300 604M1366 700L1378 684M1538 690L1544 720M1988 556L1996 582M2332 374L2346 386M2482 206L2498 218" stroke="#ffffff" strokeWidth={3} />

      {/* Position pin */}
      <path
        d="M1435 726C1425 666 1333 560 1333 460A102 102 0 0 1 1537 460C1537 560 1445 666 1435 726Z"
        fill="#63b84e"
        stroke="#151515"
        strokeWidth={12}
        strokeLinejoin="round"
      />
      <path
        d="M1380 388H1456V410L1468 428L1472 444L1490 462L1502 484L1492 492L1480 486L1466 470V560L1456 568H1446L1438 558V508L1428 514H1418L1412 506L1402 510L1392 500L1376 502L1366 488V446L1374 434Z"
        fill="#ffffff"
        stroke="#333333"
        strokeWidth={9}
        strokeLinejoin="round"
      />
      <path d="M1392 500V472M1412 506V478M1438 514V482" stroke="#333333" strokeWidth={5} />
    </svg>
  );
}

const ICONS = {
  down: 'M8.12 9.29L12 13.17l3.88-3.88a.996.996 0 1 1 1.41 1.41l-4.59 4.59a.996.996 0 0 1-1.41 0L6.7 10.7a.996.996 0 0 1 0-1.41c.39-.38 1.03-.39 1.42 0z',
  pause: 'M8 19c1.1 0 2-.9 2-2V7c0-1.1-.9-2-2-2s-2 .9-2 2v10c0 1.1.9 2 2 2zm6-12v10c0 1.1.9 2 2 2s2-.9 2-2V7c0-1.1-.9-2-2-2s-2 .9-2 2z',
  edit: 'M3 17.46v3.04c0 .28.22.5.5.5h3.04c.13 0 .26-.05.35-.15L17.81 9.94l-3.75-3.75L3.15 17.1c-.1.1-.15.22-.15.36zM20.71 7.04a.996.996 0 0 0 0-1.41l-2.34-2.34a.996.996 0 0 0-1.41 0l-1.83 1.83 3.75 3.75 1.83-1.83z',
  trash: 'M6 19c0 1.1.9 2 2 2h8c1.1 0 2-.9 2-2V9c0-1.1-.9-2-2-2H8c-1.1 0-2 .9-2 2v10zM18 4h-2.5l-.71-.71c-.18-.18-.44-.29-.7-.29H9.91c-.26 0-.52.11-.7.29L8.5 4H6c-.55 0-1 .45-1 1s.45 1 1 1h12c.55 0 1-.45 1-1s-.45-1-1-1z',
  photos: 'M22 16V4c0-1.1-.9-2-2-2H8c-1.1 0-2 .9-2 2v12c0 1.1.9 2 2 2h12c1.1 0 2-.9 2-2zm-10.6-3.47l1.63 2.18 2.58-3.22a.5.5 0 0 1 .78 0l2.96 3.7c.26.33.03.81-.39.81H9a.5.5 0 0 1-.4-.8l2-2.67c.2-.26.6-.26.8 0zM2 7v13c0 1.1.9 2 2 2h13c.55 0 1-.45 1-1s-.45-1-1-1H5c-.55 0-1-.45-1-1V7c0-.55-.45-1-1-1s-1 .45-1 1z',
  mic: 'M12 14c1.66 0 3-1.34 3-3V5c0-1.66-1.34-3-3-3S9 3.34 9 5v6c0 1.66 1.34 3 3 3zm5.91-3c-.49 0-.9.36-.98.85C16.52 14.2 14.47 16 12 16s-4.52-1.8-4.93-4.15a.998.998 0 0 0-.98-.85c-.61 0-1.09.54-1 1.14.49 3 2.89 5.35 5.91 5.78V20c0 .55.45 1 1 1s1-.45 1-1v-2.08a6.993 6.993 0 0 0 5.91-5.78c.1-.6-.39-1.14-1-1.14z',
};

function Icon({ name, className }: { name: keyof typeof ICONS; className: string }) {
  return (
    <svg viewBox="0 0 24 24" fill="currentColor" className={className} aria-hidden="true">
      <path d={ICONS[name]} />
    </svg>
  );
}

function StatusBar() {
  return (
    <div className="flex h-[142px] items-center pl-[43px] pr-[75px] text-black">
      <span className="font-[Roboto,sans-serif] text-[37px] leading-none">6:42</span>
      <svg viewBox="0 0 28 28" className="ml-[26px] h-7 w-7" fill="none" stroke="currentColor" strokeWidth={4} strokeLinecap="round" aria-hidden="true">
        <path d="M18 3C9 0 2 7 2 14s7 13 16 11M2 14C3 8 10 7 13 13s5 9 9 6c3-2 3-4 4-6" />
      </svg>
      <svg viewBox="0 0 30 36" className="ml-[29px] h-9 w-[30px]" fill="none" stroke="currentColor" strokeWidth={4} strokeLinejoin="round" aria-hidden="true">
        <path d="M15 2L28 7V16C28 24 23 30 15 34C7 30 2 24 2 16V7ZM12 4C8 18 26 14 21 28" />
      </svg>
      <svg viewBox="0 0 38 30" className="ml-auto h-[30px] w-[38px]" fill="none" stroke="currentColor" strokeWidth={5} strokeLinecap="round" aria-hidden="true">
        <path d="M3 9Q18 -3 34 8" />
        <path d="M11 16Q17 11 23 14" strokeWidth={6} />
        <circle cx={19} cy={25} r={3} fill="currentColor" stroke="none" />
        <path d="M35 14V20M35 27v.1" strokeWidth={4} />
      </svg>
      <svg viewBox="0 0 70 34" className="ml-5 h-[34px] w-[70px]" fill="currentColor" aria-hidden="true">
        <rect width={63} height={34} rx={11} />
        <path d="M66 9q4 0 4 4v8q0 4-4 4z" />
      </svg>
    </div>
  );
}

function CloudySun() {
  return (
    <svg viewBox="0 0 36 28" className="h-7 w-9" aria-hidden="true">
      <path d="M15 0l2 6-4-1zM6 2l5 4-3 3zM0 11l6 1-2 3zM2 22l3-5 3 3zM25 5l-4 4-1-4z" fill="#fcb92c" />
      <circle cx={13} cy={14} r={8} fill="#fcc02e" />
      <path d="M10 27C2 26 3 17 10 17C12 8 23 7 25 15C32 15 31 20 32 22C37 24 35 27 32 27Z" fill="#e3e7ea" />
      <path d="M6 24Q18 28 34 24Q34 27 31 27H10Q7 26 6 24Z" fill="#b8cdd4" />
    </svg>
  );
}

function Stat({ value, label }: { value: string; label: string }) {
  return (
    <div className="flex flex-col items-center">
      <span className="text-[52px] font-semibold leading-[68px] text-[#112a29]">{value}</span>
      <span className="mt-3 text-[30px] font-light leading-[42px]">{label}</span>
    </div>
  );
}

function RoundButton({ icon, label }: { icon: keyof typeof ICONS; label: string }) {
  return (
    <button
      type="button"
      aria-label={label}
      className="flex h-[142px] w-[142px] shrink-0 items-center justify-center rounded-full bg-white text-[#0c9488] shadow-[0_16px_26px_rgba(0,0,0,0.24),0_0_6px_rgba(0,0,0,0.06)]"
    >
      <Icon name={icon} className="h-[63px] w-[63px]" />
    </button>
  );
}

export default function App() {
  const progress = 25;

  return (
    <div className="flex min-h-screen flex-col bg-[#fefefe] font-[Inter,sans-serif] text-[#5b716e]">
      <StatusBar />

      {/* Header */}
      <header className="flex h-[150px] items-center px-[42px]">
        <button type="button" aria-label="Minimize" className="flex h-16 w-16 items-center justify-center">
          <Icon name="down" className="h-[63px] w-[63px]" />
        </button>
        <h1 className="ml-[30px] text-[36px] font-medium">Walk in progress</h1>
      </header>

      <main className="px-[42px] pt-[22px]">
        {/* Stats */}
        <div className="flex justify-between">
          <Stat value="1.28 km" label="Distance" />
          <Stat value="5.00 km" label="Target" />
          <Stat value="03:26" label="Time" />
        </div>

        <div className="mt-[43px] flex items-center gap-3 text-[32px] font-light leading-[44px]">
          <CloudySun />
          <span>25°C · Cloudy</span>
        </div>

        {/* Loop progress */}
        <div className="mt-10 flex h-4 gap-[11px]" role="progressbar" aria-label="Loop progress" aria-valuenow={progress}>
          <div className="rounded-full bg-[#0c9488]" style={{ width: `${progress + 1.5}%` }} />
          <div className="flex flex-1 items-center justify-end rounded-full bg-[#f8faf9] pr-[2px]">
            <span className="h-[11px] w-[11px] rounded-full bg-[#0c9488]" />
          </div>
        </div>
        <div className="mt-[27px] mb-10 flex justify-between text-[32px] font-light leading-[44px]">
          <span>25% of your loop</span>
          <span>28 m from start · ~1 min to start</span>
        </div>

        <WalkMap />

        <button
          type="button"
          className="mx-auto mt-8 flex h-[105px] items-center rounded-full border-[3px] border-[#cfe5e2] px-[61px] text-[35px] font-medium text-[#112a29]"
        >
          <Icon name="pause" className="mr-4 h-[47px] w-[47px]" />
          Rest
        </button>

        {/* Note */}
        <article className="mt-[52px] flex gap-[26px]">
          <div className="flex h-[89px] w-[89px] shrink-0 items-center justify-center rounded-full bg-[#e5f4f3] text-[#0c9488]">
            <Icon name="edit" className="h-[47px] w-[47px]" />
          </div>
          <div className="flex-1">
            <p className="w-fit rounded-[52px] rounded-tl-2xl bg-[#f8faf9] px-[37px] py-[35px] text-[41px] font-light leading-[52px] text-[#112a29] shadow-[0_3px_4px_rgba(0,0,0,0.2)]">
              Quiet courtyard by the old chapel here
            </p>
            <div className="mt-[30px] flex items-center pl-[11px] pr-[17px]">
              <time className="text-[29px] font-light leading-[42px]">5:59 PM</time>
              <button type="button" aria-label="Edit note" className="ml-auto">
                <Icon name="edit" className="h-[42px] w-[42px]" />
              </button>
              <button type="button" aria-label="Delete note" className="ml-[37px] text-[#e05252]">
                <Icon name="trash" className="h-[42px] w-[42px]" />
              </button>
            </div>
          </div>
        </article>
      </main>

      {/* Actions */}
      <div className="mt-auto flex gap-[26px] px-[42px]">
        <RoundButton icon="photos" label="Add photo" />
        <RoundButton icon="edit" label="Add note" />
        <RoundButton icon="mic" label="Record voice" />
        <button type="button" className="h-[142px] flex-1 rounded-full bg-[#0c9488] text-[36px] font-semibold text-white">
          Finish
        </button>
      </div>

      {/* System navigation */}
      <nav className="mt-[42px] flex h-[126px] items-center justify-around pl-[73px] pr-[77px] text-[#666666]">
        <button type="button" aria-label="Back">
          <svg viewBox="0 0 44 46" className="h-[46px] w-11" fill="currentColor">
            <path d="M36 1.500Q42 -1 42 5V41Q42 47 36 44.500L4 26Q0 23 4 20Z" />
          </svg>
        </button>
        <button type="button" aria-label="Home" className="h-11 w-11 rounded-full bg-[#666666]" />
        <button type="button" aria-label="Recent apps" className="h-10 w-10 rounded-[5px] bg-[#666666]" />
      </nav>
    </div>
  );
}
